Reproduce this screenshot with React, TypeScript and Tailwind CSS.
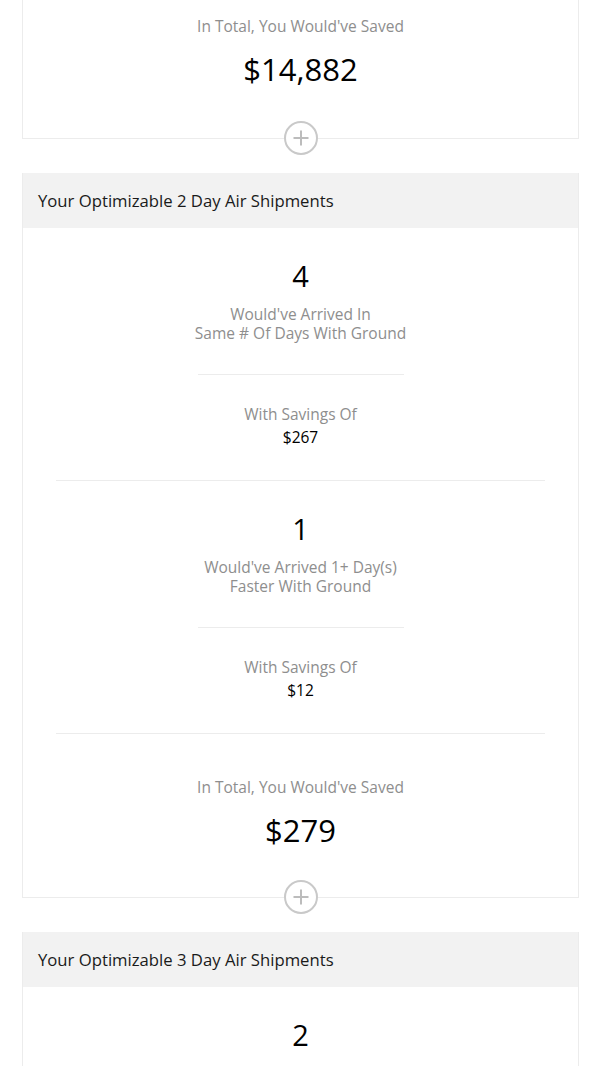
import React from 'react';

type Group = { count: number; line1: string; line2: string; savings: string };

const sections: { title: string; groups: Group[]; total: string }[] = [
  {
    title: 'Your Optimizable 2 Day Air Shipments',
    groups: [
      { count: 4, line1: "Would've Arrived In", line2: 'Same # Of Days With Ground', savings: '$267' },
      { count: 1, line1: "Would've Arrived 1+ Day(s)", line2: 'Faster With Ground', savings: '$12' },
    ],
    total: '$279',
  },
  {
    title: 'Your Optimizable 3 Day Air Shipments',
    groups: [
      { count: 2, line1: "Would've Arrived In", line2: 'Same # Of Days With Ground', savings: '$58' },
    ],
    total: '$58',
  },
];

const PlusButton = () => (
  <div className="absolute left-1/2 bottom-0 -translate-x-1/2 translate-y-1/2 w-[34px] h-[34px] rounded-full border-2 border-[#c9c9c9] bg-white flex items-center justify-center">
    <svg width="18" height="18" viewBox="0 0 18 18" fill="none">
      <path d="M9 1.5v15M1.5 9h15" stroke="#bcbcbc" strokeWidth="2" />
    </svg>
  </div>
);

const Total = ({ value }: { value: string }) => (
  <div className="text-center">
    <p className="text-[15.5px] leading-[19px] text-[#8e8e8e]">In Total, You Would've Saved</p>
    <p className="mt-[13px] text-[31px] leading-[40px] text-black">{value}</p>
  </div>
);

const ShipmentGroup = ({ group }: { group: Group }) => (
  <div className="pt-[30px] pb-[33px] border-b border-[#ececec] text-center">
    <p className="text-[29px] leading-[36px] text-black">{group.count}</p>
    <p className="mt-[11px] text-[15.5px] leading-[19px] text-[#8e8e8e]">
      {group.line1}
      <br />
      {group.line2}
    </p>
    <div className="mx-auto mt-[31px] w-[206px] border-t border-[#ececec]" />
    <p className="mt-[30px] text-[15.5px] leading-[19px] text-[#8e8e8e]">With Savings Of</p>
    <p className="mt-[3px] text-[15.5px] leading-[20px] text-black">{group.savings}</p>
  </div>
);

export default function App() {
  return (
    <div className="h-[1066px] overflow-hidden bg-white" style={{ fontFamily: '"Open Sans", Lato, sans-serif' }}>
      <div className="ml-[22px] mr-[21px] relative border-x border-b border-[#ececec] pt-[17px] pb-[49px]">
        <Total value="$14,882" />
        <PlusButton />
      </div>

      {sections.map((s) => (
        <div key={s.title} className="ml-[22px] mr-[21px] mt-[34px] relative border-x border-b border-[#ececec]">
          <div className="h-[55px] bg-[#f2f2f2] flex items-center pl-[15px] text-[16.7px] text-[#1a1a1a]">{s.title}</div>
          <div className="px-[33px]">
            {s.groups.map((g, i) => (
              <ShipmentGroup key={i} group={g} />
            ))}
          </div>
          <div className="pt-[44px] pb-[47px]">
            <Total value={s.total} />
          </div>
          <PlusButton />
        </div>
      ))}
    </div>
  );
}
